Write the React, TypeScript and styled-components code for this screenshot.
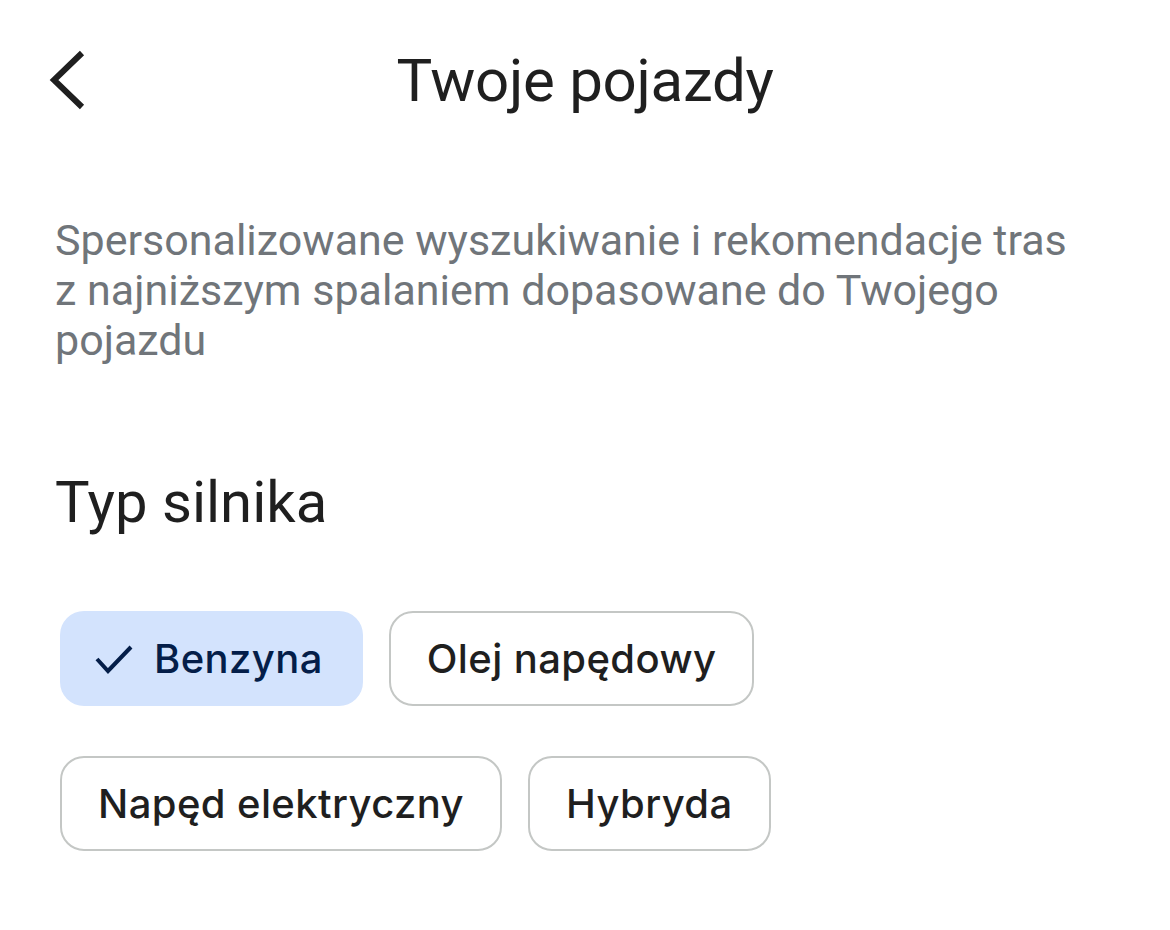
import * as React from 'react';
import styled, { createGlobalStyle } from 'styled-components';

const GlobalStyle = createGlobalStyle`
  html, body {
    margin: 0;
    padding: 0;
    background: #fff;
  }
  body {
    font-family: Roboto, "Liberation Sans", sans-serif;
    color: #1f1f1f;
  }
`;

const StyledPage = styled.div`
  display: flex;
  flex-direction: column;
  width: 1170px;
  min-height: 930px;
  box-sizing: border-box;
  padding: 0 55px;
`;

const StyledHeader = styled.header`
  display: grid;
  grid-template-columns: 1fr auto 1fr;
  align-items: center;
  height: 160px;
  margin: 0 -55px;
  padding: 0 48px;
`;

const StyledBack = styled.button`
  justify-self: start;
  display: flex;
  align-items: center;
  border: none;
  padding: 0;
  background: none;
  cursor: pointer;
  color: #1f1f1f;
`;

const StyledTitle = styled.h1`
  margin: 0;
  font-size: 60px;
  font-weight: 400;
  color: #1f1f1f;
  letter-spacing: -0.3px;
`;

const StyledDescription = styled.p`
  margin: 55px 0 0;
  max-width: 1028px;
  font-size: 43px;
  line-height: 50px;
  color: #70757a;
`;

const StyledHeading = styled.h2`
  margin: 102px 0 0;
  font-size: 58px;
  font-weight: 400;
  line-height: 70px;
  color: #1f1f1f;
`;

const StyledChips = styled.div`
  display: flex;
  flex-wrap: wrap;
  column-gap: 26px;
  row-gap: 50px;
  margin: 74px 0 0 5px;
  max-width: 760px;
`;

const StyledChip = styled.button<{ $selected?: boolean }>`
  display: flex;
  align-items: center;
  gap: 21px;
  box-sizing: border-box;
  height: 95px;
  padding: 0 ${(p) => (p.$selected ? '40px' : '36px')} 0 ${(p) => (p.$selected ? '35px' : '36px')};
  border: ${(p) => (p.$selected ? 'none' : '2.5px solid #c4c7c5')};
  border-radius: 24px;
  background: ${(p) => (p.$selected ? '#d3e3fd' : '#fff')};
  font-family: Inter, Roboto, "Liberation Sans", sans-serif;
  font-size: 40px;
  font-weight: 500;
  letter-spacing: 0.4px;
  color: ${(p) => (p.$selected ? '#041e49' : '#1f1f1f')};
  cursor: pointer;
`;

const engines = ['Benzyna', 'Olej napędowy', 'Napęd elektryczny', 'Hybryda'];

const App: React.FC = () => {
  const [selected, setSelected] = React.useState('Benzyna');
  return (
    <>
      <GlobalStyle />
      <StyledPage>
        <StyledHeader>
          <StyledBack aria-label="Wstecz">
            <svg width="38" height="60" viewBox="0 0 38 60" fill="none">
              <path d="M34 3 L6 30 L34 57" stroke="#1f1f1f" strokeWidth="6" />
            </svg>
          </StyledBack>
          <StyledTitle>Twoje pojazdy</StyledTitle>
          <span />
        </StyledHeader>
        <StyledDescription>
          Spersonalizowane wyszukiwanie i rekomendacje tras z najniższym spalaniem dopasowane do
          Twojego pojazdu
        </StyledDescription>
        <StyledHeading>Typ silnika</StyledHeading>
        <StyledChips>
          {engines.map((name) => (
            <StyledChip key={name} $selected={name === selected} onClick={() => setSelected(name)}>
              {name === selected && (
                <svg width="38" height="30" viewBox="0 0 38 30" fill="none">
                  <path d="M2 15 L13 27 L36 3" stroke="#041e49" strokeWidth="4" />
                </svg>
              )}
              {name}
            </StyledChip>
          ))}
        </StyledChips>
      </StyledPage>
    </>
  );
};

export default App;
